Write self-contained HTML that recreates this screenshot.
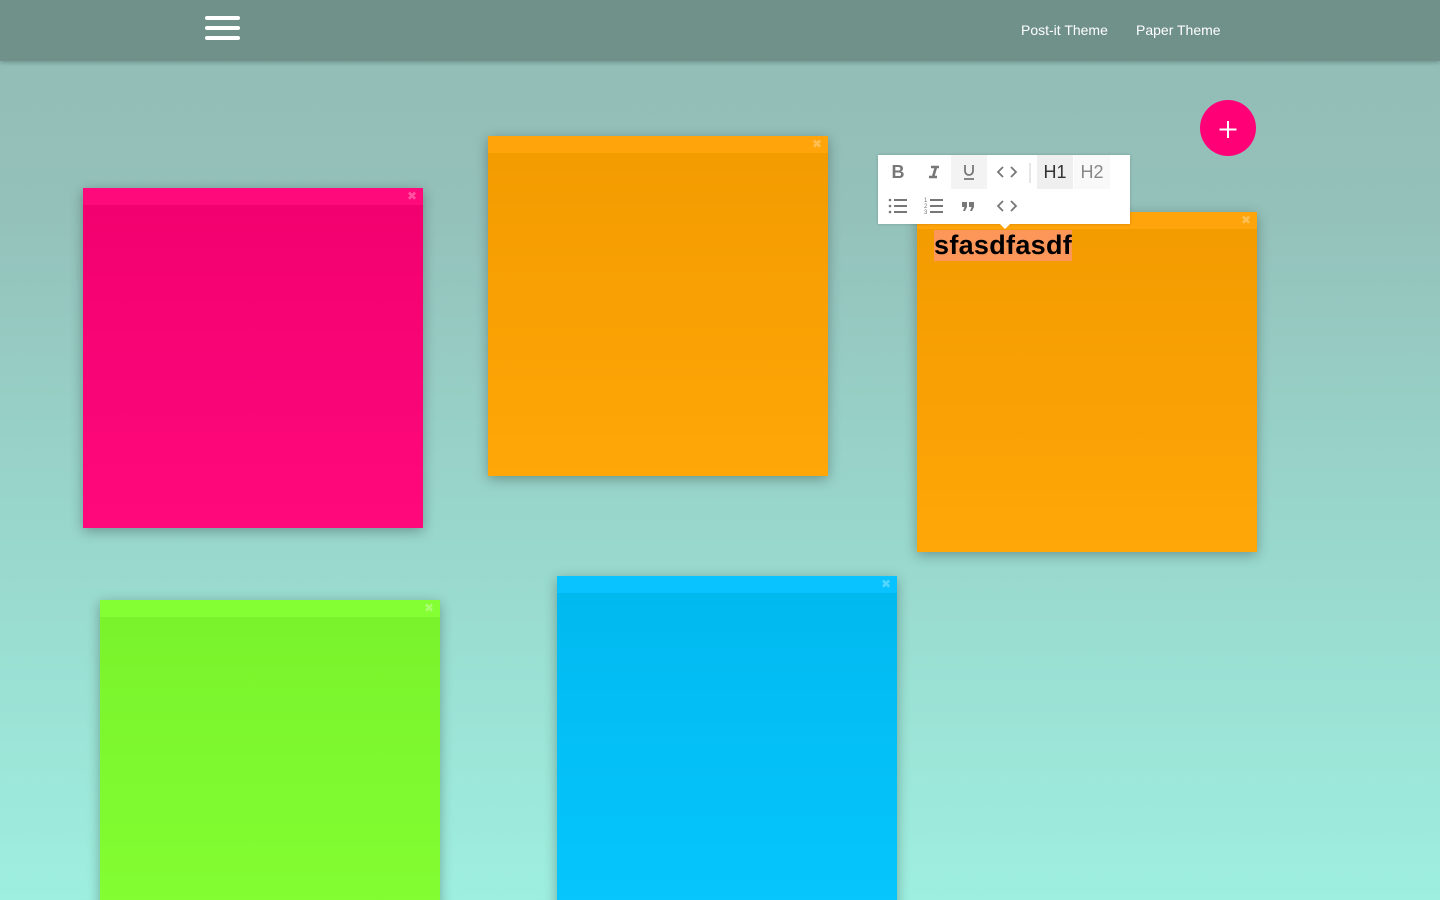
<!DOCTYPE html>
<html><head><meta charset="utf-8"><style>
*{margin:0;padding:0;box-sizing:border-box}
html{width:1440px;height:900px;overflow:hidden}
body{width:1440px;height:900px;overflow:hidden;position:relative;font-family:"Liberation Sans",Arial,sans-serif;background:linear-gradient(#93bdb7 60px,#94c1ba 200px,#9eefe0 900px)}
.hdr{position:absolute;left:0;top:0;width:1440px;height:61px;background:#6f918a;box-shadow:0 2px 4px rgba(0,0,0,.2)}
.ham{position:absolute;left:205px;width:35px;height:4px;background:#fff;border-radius:2px}
.nav{position:absolute;top:22px;color:#fff;font-size:14px}
.fab{position:absolute;left:1200px;top:100px;width:56px;height:56px;border-radius:50%;background:#ff0077}
.note{position:absolute;width:340px;height:340px;box-shadow:0 3px 12px rgba(0,0,0,.3)}
.note .bar{height:17px;position:relative}
.note .x{position:absolute;right:6px;top:0;font-size:12px;color:rgba(255,255,255,.3);line-height:17px}
.tb{position:absolute;left:878px;top:155px;width:252px;height:69px;background:#fff;box-shadow:0 0 3px rgba(0,0,0,.2)}
.tb .b{position:absolute;width:36px;height:34px;text-align:center;line-height:34px;color:#777;font-size:18px}
.tb svg{position:absolute;left:8px;top:7px}
.tb:after{content:"";position:absolute;left:122px;bottom:-5px;border:5px solid transparent;border-top-color:#fff;border-bottom:0}
</style></head><body>
<div class="hdr">
<div class="ham" style="top:16px"></div><div class="ham" style="top:26px"></div><div class="ham" style="top:36px"></div>
<div class="nav" style="left:1021px">Post-it Theme</div>
<div class="nav" style="left:1136px">Paper Theme</div>
</div>
<div class="fab"><svg width="56" height="56"><path d="M28 21v17M19.5 29.5h17" stroke="#fff" stroke-width="2"/></svg></div>
<div class="note" style="left:83px;top:188px;background:linear-gradient(#f2006f,#ff087c)"><div class="bar" style="background:#ff0a7a"><span class="x">✖</span></div></div>
<div class="note" style="left:488px;top:136px;background:linear-gradient(#f29b00,#ffa608)"><div class="bar" style="background:#ffa40a"><span class="x">✖</span></div></div>
<div class="note" style="left:917px;top:212px;background:linear-gradient(#f29b00,#ffa608)"><div class="bar" style="background:#ffa40a"><span class="x">✖</span></div>
<div style="position:absolute;left:17px;top:18px;font-size:27px;font-weight:bold;color:#000;background:#fc9659;line-height:31px;letter-spacing:.3px">sfasdfasdf</div></div>
<div class="note" style="left:100px;top:600px;background:linear-gradient(#79f22b,#84ff33)"><div class="bar" style="background:#84ff33"><span class="x">✖</span></div></div>
<div class="note" style="left:557px;top:576px;background:linear-gradient(#00b9ee,#06c6fe)"><div class="bar" style="background:#08c3ff"><span class="x">✖</span></div></div>
<div class="tb">
<div class="b" style="left:2px;top:0;font-weight:bold">B</div>
<div class="b" style="left:38px;top:0"><svg width="20" height="20"><path d="M7 5h8M5 15h8M12 5l-3 10" stroke="#777" stroke-width="2.6" fill="none"/></svg></div>
<div class="b" style="left:73px;top:0;background:#f3f3f3"><svg width="20" height="20"><path d="M6 3v6a4 4 0 0 0 8 0V3M5 17h10" stroke="#777" stroke-width="1.8" fill="none"/></svg></div>
<div class="b" style="left:110px;top:0"><svg width="22" height="20"><path d="M7 5l-5 5 5 5M15 5l5 5-5 5" stroke="#777" stroke-width="1.8" fill="none"/></svg></div>
<div style="position:absolute;left:151px;top:8px;width:2px;height:20px;background:#e6e6e6"></div>
<div class="b" style="left:159px;top:0;background:#efefef;color:#333">H1</div>
<div class="b" style="left:196px;top:0;background:#f9f9f9;color:#888">H2</div>
<div class="b" style="left:2px;top:34px"><svg width="20" height="20"><circle cx="2" cy="4" r="1.3" fill="#777"/><circle cx="2" cy="10" r="1.3" fill="#777"/><circle cx="2" cy="16" r="1.3" fill="#777"/><path d="M6 4h13M6 10h13M6 16h13" stroke="#777" stroke-width="2"/></svg></div>
<div class="b" style="left:38px;top:34px"><svg width="20" height="20"><text x="0" y="6" font-size="6" fill="#777" font-family="Liberation Sans">1</text><text x="0" y="12" font-size="6" fill="#777" font-family="Liberation Sans">2</text><text x="0" y="18" font-size="6" fill="#777" font-family="Liberation Sans">3</text><path d="M6 4h13M6 10h13M6 16h13" stroke="#777" stroke-width="2"/></svg></div>
<div class="b" style="left:73px;top:34px"><svg width="20" height="20"><path d="M3 6h5v5l-2 4H4l1.5-4H3zM10 6h5v5l-2 4h-2l1.5-4H10z" fill="#777"/></svg></div>
<div class="b" style="left:110px;top:34px"><svg width="22" height="20"><path d="M7 5l-5 5 5 5M15 5l5 5-5 5" stroke="#777" stroke-width="1.8" fill="none"/></svg></div>
</div>
</body></html>
